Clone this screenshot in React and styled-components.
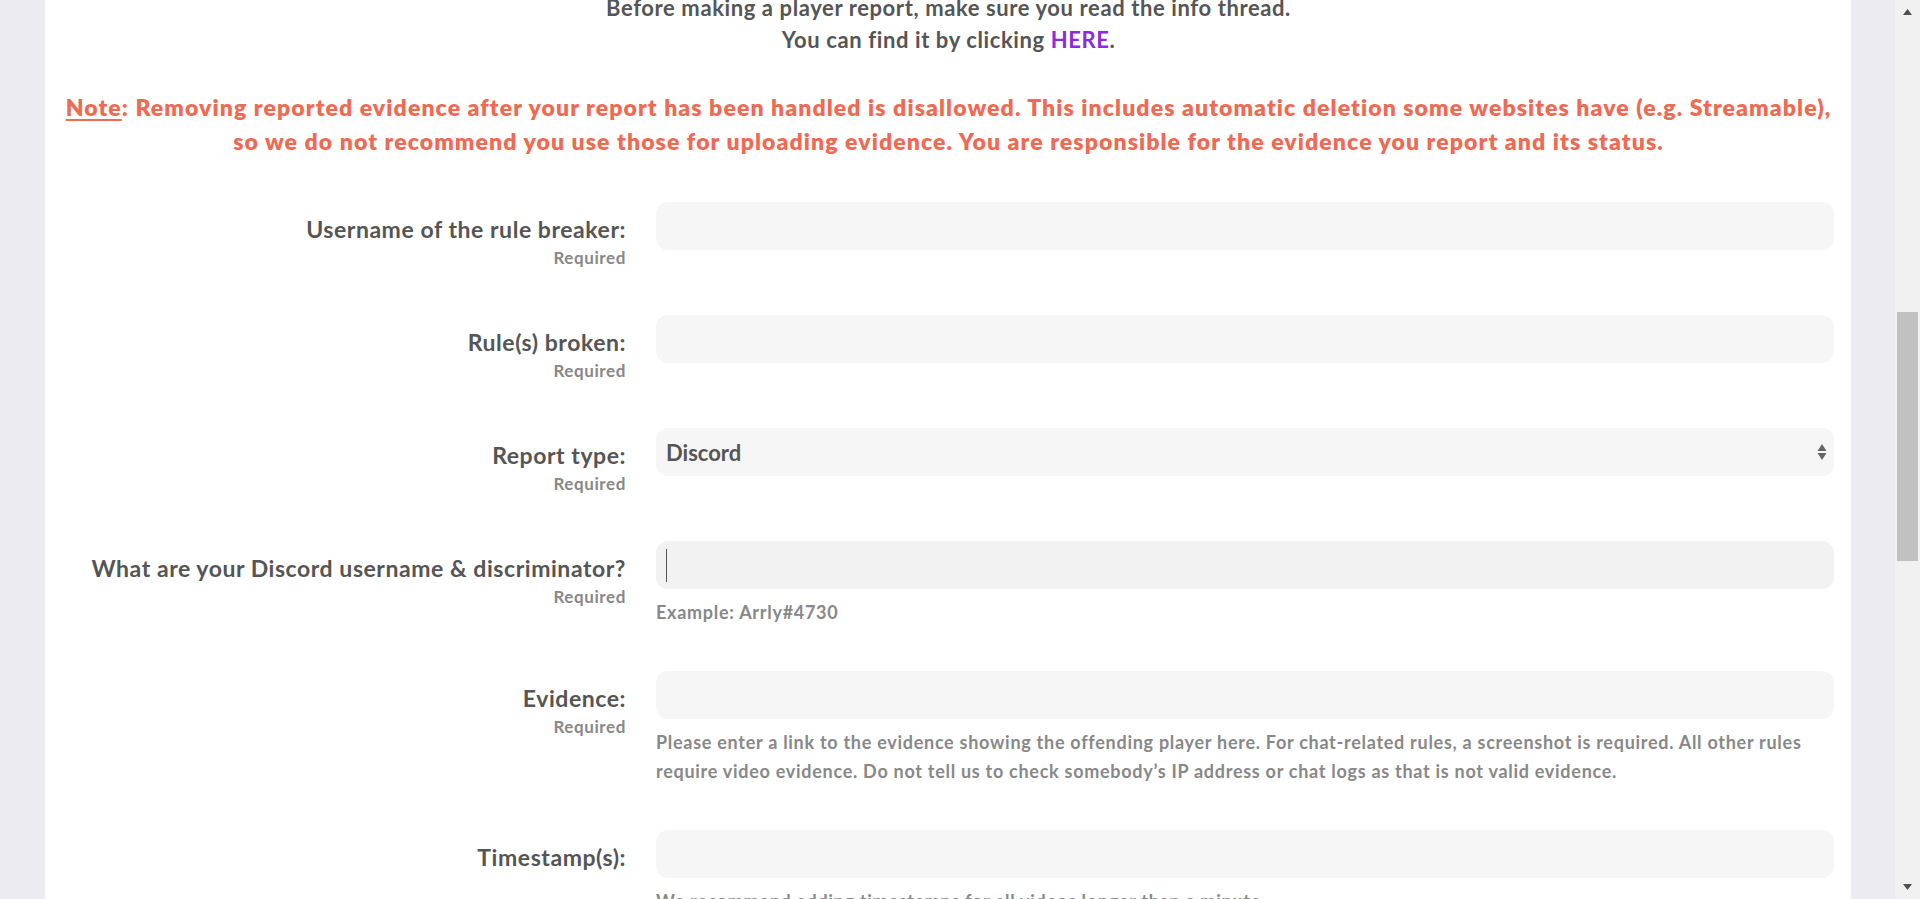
import styled, { createGlobalStyle } from "styled-components";

const Global = createGlobalStyle`
  html, body {
    margin: 0;
    padding: 0;
    height: 100%;
    overflow: hidden;
    background: #ecebf1;
  }
  * {
    box-sizing: border-box;
  }
`;

const Page = styled.div`
  display: flex;
  height: 100vh;
  overflow: hidden;
  background: #ecebf1;
  font-family: Lato, "Noto Sans", sans-serif;
`;

const Gutter = styled.div`
  flex: 0 0 ${(p) => p.w}px;
`;

const Main = styled.main`
  flex: 1;
  background: #ffffff;
  padding: 0 17px 0 18px;
  overflow: hidden;
`;

const Intro = styled.div`
  margin-top: -8px;
  text-align: center;
  font-size: 22px;
  font-weight: 700;
  line-height: 32px;
  letter-spacing: 0.6px;
  color: #555555;
`;

const Link = styled.a`
  color: #8a2be2;
  text-decoration: none;
`;

const Note = styled.p`
  margin: 34px 0 0;
  text-align: center;
  white-space: nowrap;
  font-size: 23px;
  font-weight: 800;
  line-height: 34px;
  letter-spacing: 1.1px;
  color: #ef6a53;

  u {
    text-underline-offset: 3px;
  }
`;

const Form = styled.form`
  margin-top: 44px;
`;

const Row = styled.div`
  display: grid;
  grid-template-columns: 563px 1fr;
  column-gap: 30px;
  margin-bottom: 44px;
`;

const LabelCol = styled.div`
  text-align: right;
  padding-top: 12px;
`;

const Label = styled.label`
  display: block;
  font-size: 23px;
  font-weight: 700;
  line-height: 30px;
  letter-spacing: 0.55px;
  color: #555555;
`;

const Required = styled.div`
  margin-top: 1px;
  font-size: 17px;
  font-weight: 700;
  line-height: 26px;
  letter-spacing: 0.6px;
  color: #888888;
`;

const FieldCol = styled.div`
  min-width: 0;
`;

const InputWrap = styled.div`
  position: relative;
`;

const Input = styled.input`
  display: block;
  width: 100%;
  height: 48px;
  padding: 0 10px;
  border: none;
  outline: none;
  border-radius: 12px;
  background: ${(p) => (p.$focused ? "#f2f2f2" : "#f6f6f6")};
  font-family: inherit;
  font-size: 22px;
  font-weight: 700;
  color: #555555;
`;

const Caret = styled.span`
  position: absolute;
  left: 10px;
  top: 8px;
  width: 1px;
  height: 33px;
  background: #555555;
`;

const Select = styled.select`
  display: block;
  width: 100%;
  height: 48px;
  padding: 0 10px;
  border: none;
  outline: none;
  border-radius: 12px;
  background: #f6f6f6;
  appearance: none;
  font-family: inherit;
  font-size: 22px;
  font-weight: 700;
  color: #555555;
`;

const Arrows = styled.svg`
  position: absolute;
  right: 7px;
  top: 14px;
  pointer-events: none;
`;

const Hint = styled.div`
  margin-top: 9px;
  font-size: 18px;
  font-weight: 700;
  line-height: 29px;
  letter-spacing: 0.72px;
  color: #888888;
`;

const Scrollbar = styled.div`
  flex: 0 0 25px;
  display: flex;
  flex-direction: column;
  align-items: center;
  background: #f1f1f1;
`;

const ScrollArrow = styled.div`
  flex: 0 0 24px;
  display: flex;
  align-items: center;
  justify-content: center;
`;

const Track = styled.div`
  flex: 1;
  width: 100%;
  padding: 0 2px;
`;

const Thumb = styled.div`
  margin-top: 288px;
  height: 249px;
  background: #c1c1c1;
`;

const Field = ({ label, required, hint, focused }) => (
  <Row>
    <LabelCol>
      <Label>{label}</Label>
      {required && <Required>Required</Required>}
    </LabelCol>
    <FieldCol>
      <InputWrap>
        <Input type="text" $focused={focused} />
        {focused && <Caret />}
      </InputWrap>
      {hint && <Hint>{hint}</Hint>}
    </FieldCol>
  </Row>
);

const App = () => {
  return (
    <>
      <Global />
      <Page>
        <Gutter w={45} />
        <Main>
          <Intro>
            Before making a player report, make sure you read the info thread.
            <br />
            You can find it by clicking <Link href="#">HERE</Link>.
          </Intro>
          <Note>
            <u>Note</u>: Removing reported evidence after your report has been
            handled is disallowed. This includes automatic deletion some
            websites have (e.g. Streamable),
            <br />
            so we do not recommend you use those for uploading evidence. You
            are responsible for the evidence you report and its status.
          </Note>
          <Form>
            <Field label="Username of the rule breaker:" required />
            <Field label="Rule(s) broken:" required />
            <Row>
              <LabelCol>
                <Label>Report type:</Label>
                <Required>Required</Required>
              </LabelCol>
              <FieldCol>
                <InputWrap>
                  <Select defaultValue="discord">
                    <option value="discord">Discord</option>
                    <option value="ingame">In-game</option>
                  </Select>
                  <Arrows width="10" height="20" viewBox="0 0 10 20">
                    <path d="M5 2 L9.5 9 H0.5 Z" fill="#666" />
                    <path d="M5 18 L9.5 11 H0.5 Z" fill="#666" />
                  </Arrows>
                </InputWrap>
              </FieldCol>
            </Row>
            <Field
              label="What are your Discord username & discriminator?"
              required
              focused
              hint="Example: Arrly#4730"
            />
            <Field
              label="Evidence:"
              required
              hint={
                <>
                  Please enter a link to the evidence showing the offending
                  player here. For chat-related rules, a screenshot is required.
                  All other rules
                  <br />
                  require video evidence. Do not tell us to check somebody’s IP
                  address or chat logs as that is not valid evidence.
                </>
              }
            />
            <Field
              label="Timestamp(s):"
              hint="We recommend adding timestamps for all videos longer than a minute."
            />
          </Form>
        </Main>
        <Gutter w={44} />
        <Scrollbar>
          <ScrollArrow>
            <svg width="9" height="6" viewBox="0 0 9 6">
              <path d="M4.5 0 L9 6 H0 Z" fill="#505050" />
            </svg>
          </ScrollArrow>
          <Track>
            <Thumb />
          </Track>
          <ScrollArrow>
            <svg width="9" height="6" viewBox="0 0 9 6">
              <path d="M0 0 H9 L4.5 6 Z" fill="#505050" />
            </svg>
          </ScrollArrow>
        </Scrollbar>
      </Page>
    </>
  );
};

export default App;
